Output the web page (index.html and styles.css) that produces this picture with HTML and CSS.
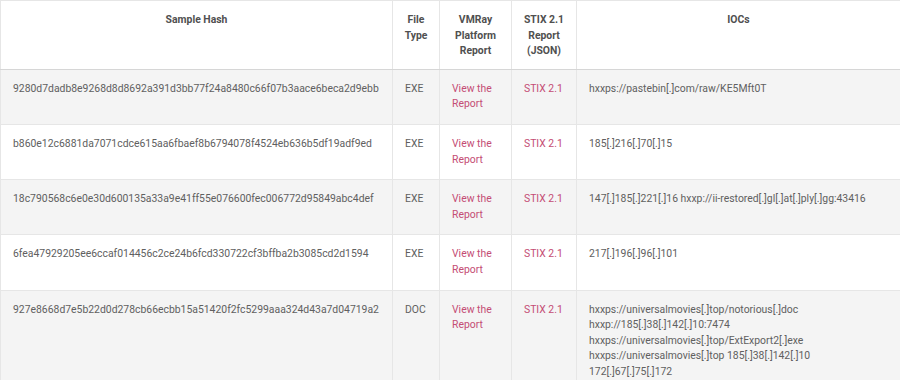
FILE: index.html
```html
<!DOCTYPE html>
<html>
<head>
<meta charset="utf-8">
<link rel="stylesheet" href="styles.css">
</head>
<body>
<table class="ioc-table">
  <colgroup>
    <col class="c-hash"><col class="c-type"><col class="c-report"><col class="c-stix"><col class="c-iocs">
  </colgroup>
  <thead>
    <tr>
      <th>Sample Hash</th>
      <th>File Type</th>
      <th>VMRay Platform Report</th>
      <th>STIX 2.1 Report (JSON)</th>
      <th>IOCs</th>
    </tr>
  </thead>
  <tbody>
    <tr>
      <td>9280d7dadb8e9268d8d8692a391d3bb77f24a8480c66f07b3aace6beca2d9ebb</td>
      <td>EXE</td>
      <td><a href="#">View the Report</a></td>
      <td><a href="#">STIX 2.1</a></td>
      <td>hxxps://pastebin[.]com/raw/KE5Mft0T</td>
    </tr>
    <tr>
      <td>b860e12c6881da7071cdce615aa6fbaef8b6794078f4524eb636b5df19adf9ed</td>
      <td>EXE</td>
      <td><a href="#">View the Report</a></td>
      <td><a href="#">STIX 2.1</a></td>
      <td>185[.]216[.]70[.]15</td>
    </tr>
    <tr>
      <td>18c790568c6e0e30d600135a33a9e41ff55e076600fec006772d95849abc4def</td>
      <td>EXE</td>
      <td><a href="#">View the Report</a></td>
      <td><a href="#">STIX 2.1</a></td>
      <td>147[.]185[.]221[.]16 hxxp://ii-restored[.]gl[.]at[.]ply[.]gg:43416</td>
    </tr>
    <tr>
      <td>6fea47929205ee6ccaf014456c2ce24b6fcd330722cf3bffba2b3085cd2d1594</td>
      <td>EXE</td>
      <td><a href="#">View the Report</a></td>
      <td><a href="#">STIX 2.1</a></td>
      <td>217[.]196[.]96[.]101</td>
    </tr>
    <tr>
      <td>927e8668d7e5b22d0d278cb66ecbb15a51420f2fc5299aaa324d43a7d04719a2</td>
      <td>DOC</td>
      <td><a href="#">View the Report</a></td>
      <td><a href="#">STIX 2.1</a></td>
      <td>hxxps://universalmovies[.]top/notorious[.]doc<br>hxxp://185[.]38[.]142[.]10:7474<br>hxxps://universalmovies[.]top/ExtExport2[.]exe<br>hxxps://universalmovies[.]top 185[.]38[.]142[.]10<br>172[.]67[.]75[.]172</td>
    </tr>
  </tbody>
</table>
</body>
</html>
```

FILE: styles.css
```css
html, body {
  margin: 0;
  padding: 0;
  background: #fff;
}
body {
  font-family: Roboto, "Liberation Sans", sans-serif;
  font-size: 10.4px;
  color: #606060;
}
.ioc-table {
  width: 900px;
  border-collapse: collapse;
  table-layout: fixed;
}
.c-hash { width: 392px; }
.c-type { width: 47px; }
.c-report { width: 72px; }
.c-stix { width: 65px; }
.c-iocs { width: 324px; }
.ioc-table th,
.ioc-table td {
  border: 1px solid #e6e6e6;
  line-height: 15.6px;
  vertical-align: top;
  text-align: left;
}
.ioc-table th {
  padding: 11px 10px 10px;
  text-align: center;
  font-weight: 700;
  color: #505050;
  border-bottom: 1px solid #d6d6d6;
}
.ioc-table td {
  padding: 11px 12px 12px;
  border-top: 1px solid #d8d8d8;
}
.ioc-table tbody tr:nth-child(odd) td {
  background: #f4f4f4;
}
.ioc-table a {
  color: #c44d74;
  text-decoration: none;
}
```
